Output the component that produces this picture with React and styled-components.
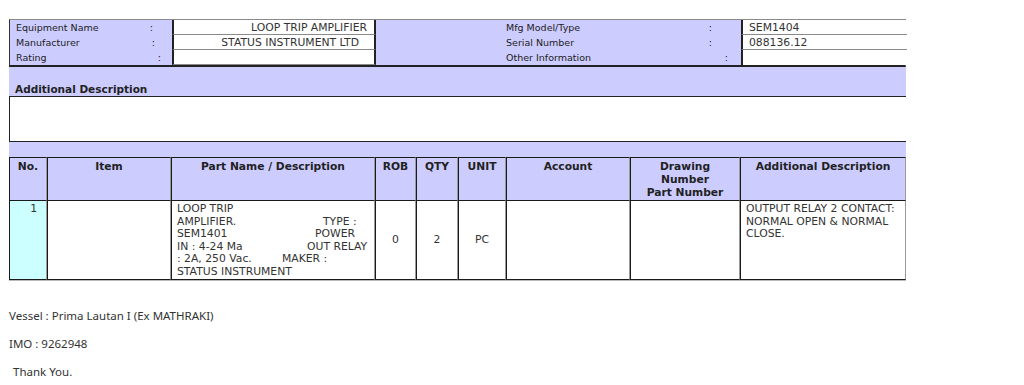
import React from "react";
import styled, { createGlobalStyle } from "styled-components";

const Global = createGlobalStyle`
  html, body { margin: 0; padding: 0; background: #ffffff; }
  body { font-family: "DejaVu Sans", Verdana, sans-serif; color: #222; }
`;

const Page = styled.div`
  padding: 19px 0 0 9px;
  display: flex;
  flex-direction: column;
`;

const Sheet = styled.div`
  width: 897px;
  background: #ccccff;
  display: flex;
  flex-direction: column;
`;

const InfoGrid = styled.div`
  display: grid;
  grid-template-columns: 162px 204px 365px 166px;
  grid-template-rows: 15px 15px 15px;
  border-top: 1px solid #8a8a8a;
  border-left: 1px solid #333;
  border-right: 1px solid #8a8a8a;
  border-bottom: 2px solid #222;
  box-sizing: border-box;
  font-size: 9.5px;
`;

const Label = styled.div`
  display: flex;
  align-items: center;
  justify-content: space-between;
  padding-left: ${(p) => p.$pl}px;
  padding-right: ${(p) => p.$pr}px;
  grid-column: ${(p) => p.$col};
`;

const Value = styled.div`
  background: #fff;
  display: flex;
  align-items: center;
  justify-content: ${(p) => (p.$right ? "flex-end" : "flex-start")};
  padding: 1px ${(p) => p.$pr || 4}px 0 6px;
  font-size: 10.8px;
  color: #333;
  border-left: 2px solid #222;
  border-right: ${(p) => (p.$mid ? "2px solid #222" : "none")};
  border-bottom: 1px solid #8a8a8a;
  grid-column: ${(p) => p.$col};
  box-sizing: border-box;
  &:nth-last-child(-n + 2) { border-bottom: none; }
`;

const DescTitle = styled.div`
  height: 29px;
  display: flex;
  align-items: flex-end;
  padding: 0 0 1px 6px;
  font-weight: bold;
  font-size: 10.5px;
  box-sizing: border-box;
`;

const DescBox = styled.div`
  height: 46px;
  background: #fff;
  border-top: 1px solid #222;
  border-left: 1px solid #222;
  border-bottom: 1px solid #222;
  box-sizing: border-box;
`;

const Gap = styled.div`
  height: 15px;
`;

const Table = styled.table`
  border-collapse: separate;
  border-spacing: 0;
  table-layout: fixed;
  width: 897px;
  font-size: 10.8px;
  line-height: 12.6px;
  color: #333;
  border-bottom: 1px solid #bbb;
`;

const Th = styled.th`
  width: ${(p) => p.$w}px;
  height: 44px;
  box-sizing: border-box;
  vertical-align: top;
  text-align: center;
  font-size: 10.7px;
  font-weight: bold;
  line-height: 13px;
  color: #222;
  padding: 2px 2px 0;
  border-top: 1px solid #1a1a1a;
  border-left: 1px solid #1a1a1a;
  border-right: 1px solid #9a9a9a;
  border-bottom: 1px solid #1a1a1a;
  background: #ccccff;
`;

const Td = styled.td`
  height: 78px;
  box-sizing: border-box;
  background: ${(p) => p.$bg || "#fff"};
  vertical-align: ${(p) => (p.$mid ? "middle" : "top")};
  text-align: ${(p) => p.$align || "left"};
  padding: 2px ${(p) => p.$pr ?? 4}px 0 ${(p) => p.$pl ?? 4}px;
  border-left: 1px solid #1a1a1a;
  border-right: 1px solid #9a9a9a;
  border-bottom: 1px solid #1a1a1a;
`;

const Line = styled.div`
  display: flex;
  white-space: nowrap;
`;

const Head = styled.span`
  width: ${(p) => p.$w}px;
  flex: none;
`;

const Notes = styled.div`
  margin-top: 27px;
  font-family: "Noto Sans", "Open Sans", sans-serif;
  font-size: 11.5px;
  color: #333;
  display: flex;
  flex-direction: column;
  gap: 12px;
`;

const Note = styled.p`
  margin: 0;
  line-height: 16px;
  padding-left: ${(p) => p.$indent || 0}px;
`;

const partLines = [
  ["LOOP TRIP"],
  ["AMPLIFIER.", "TYPE :", 146],
  ["SEM1401", "POWER", 138],
  ["IN : 4-24 Ma", "OUT RELAY", 130],
  [": 2A, 250 Vac.", "MAKER :", 105],
  ["STATUS INSTRUMENT"],
];

const columns = [
  ["No.", 38],
  ["Item", 124],
  ["Part Name / Description", 204],
  ["ROB", 41],
  ["QTY", 42],
  ["UNIT", 48],
  ["Account", 124],
  [<>Drawing<br />Number<br />Part Number</>, 110],
  ["Additional Description", 166],
];

export default function App() {
  return (
    <Page>
      <Global />
      <Sheet>
        <InfoGrid>
          <Label $col="1" $pl={6} $pr={19}><span>Equipment Name</span><span>:</span></Label>
          <Value $col="2" $right $mid $pr={7}>LOOP TRIP AMPLIFIER</Value>
          <Label $col="3" $pl={130} $pr={29}><span>Mfg Model/Type</span><span>:</span></Label>
          <Value $col="4">SEM1404</Value>
          <Label $col="1" $pl={6} $pr={17}><span>Manufacturer</span><span>:</span></Label>
          <Value $col="2" $right $mid $pr={15}>STATUS INSTRUMENT LTD</Value>
          <Label $col="3" $pl={130} $pr={29}><span>Serial Number</span><span>:</span></Label>
          <Value $col="4">088136.12</Value>
          <Label $col="1" $pl={6} $pr={11}><span>Rating</span><span>:</span></Label>
          <Value $col="2" $mid />
          <Label $col="3" $pl={130} $pr={13}><span>Other Information</span><span>:</span></Label>
          <Value $col="4" />
        </InfoGrid>
        <DescTitle>Additional Description</DescTitle>
        <DescBox />
        <Gap />
        <Table>
          <thead>
            <tr>
              {columns.map(([label, w], i) => (
                <Th key={i} $w={w}>{label}</Th>
              ))}
            </tr>
          </thead>
          <tbody>
            <tr>
              <Td $bg="#ccffff" $align="right" $pr={9}>1</Td>
              <Td />
              <Td $pl={5}>
                {partLines.map(([a, b, w], i) => (
                  <Line key={i}>
                    {b ? <><Head $w={w}>{a}</Head><span>{b}</span></> : a}
                  </Line>
                ))}
              </Td>
              <Td $mid $align="center">0</Td>
              <Td $mid $align="center">2</Td>
              <Td $mid $align="center">PC</Td>
              <Td />
              <Td />
              <Td $pl={5}>OUTPUT RELAY 2 CONTACT: NORMAL OPEN &amp; NORMAL CLOSE.</Td>
            </tr>
          </tbody>
        </Table>
      </Sheet>
      <Notes>
        <Note>Vessel : Prima Lautan I (Ex MATHRAKI)</Note>
        <Note>IMO : 9262948</Note>
        <Note $indent={4}>Thank You.</Note>
      </Notes>
    </Page>
  );
}
